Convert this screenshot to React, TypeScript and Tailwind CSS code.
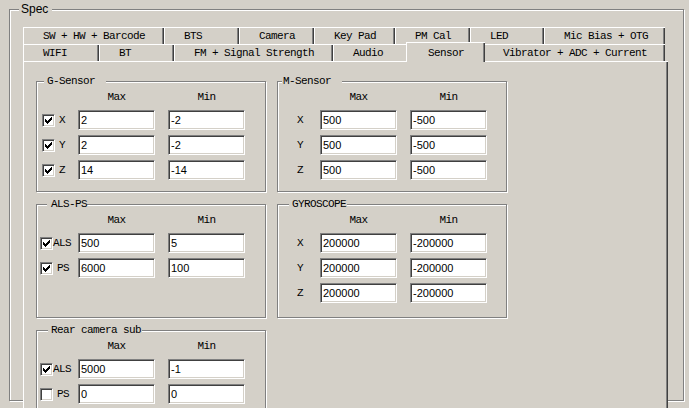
import React from 'react';

const MONO = "font-['Liberation_Mono',monospace] text-[11px] tracking-[-0.6px] leading-[12px]";

function CheckMark() {
  return (
    <svg width="7" height="7" viewBox="0 0 7 7" shapeRendering="crispEdges" fill="#000">
      <path d="M6 0h1v1h-1z M5 1h2v1h-2z M0 2h1v1h-1z M4 2h3v1h-3z M0 3h2v1h-2z M3 3h3v1h-3z M0 4h5v1h-5z M1 5h3v1h-3z M2 6h1v1h-1z" />
    </svg>
  );
}

function CheckBox({ checked }: { checked: boolean }) {
  return (
    <div className="w-[13px] h-[13px] shrink-0 bg-white border border-t-[#808080] border-l-[#808080] border-r-white border-b-white shadow-[inset_1px_1px_0_#404040,inset_-1px_-1px_0_#d4d0c8] flex items-center justify-center">
      {checked ? <CheckMark /> : null}
    </div>
  );
}

function Field({ v }: { v: string }) {
  return (
    <div className="w-[77px] h-[20px] shrink-0 bg-white border border-t-[#808080] border-l-[#808080] border-r-white border-b-white shadow-[inset_1px_1px_0_#404040,inset_-1px_-1px_0_#d4d0c8] pl-[2px] flex items-center font-['Liberation_Sans',sans-serif] text-[11px] text-black">
      {v}
    </div>
  );
}

function Group({
  label,
  labelCls,
  heightCls,
  children,
}: {
  label: string;
  labelCls: string;
  heightCls: string;
  children: React.ReactNode;
}) {
  return (
    <div className={`relative border border-[#808080] shadow-[inset_1px_1px_0_#fff,1px_1px_0_#fff] pt-[9px] ${heightCls}`}>
      <span className={`absolute top-[-7px] bg-[#d4d0c8] whitespace-pre ${MONO} ${labelCls}`}>{label}</span>
      {children}
    </div>
  );
}

function Header({ wide }: { wide: boolean }) {
  return (
    <div className={`flex ${MONO}`}>
      <div className={wide ? 'w-[42px]' : 'w-[41px]'} />
      <div className="w-[77px] text-center">Max</div>
      <div className="w-[13px]" />
      <div className="w-[77px] text-center">Min</div>
    </div>
  );
}

function Rows({ children }: { children: React.ReactNode }) {
  return <div className="mt-[7px] flex flex-col gap-[5px]">{children}</div>;
}

function Inputs({ max, min }: { max: string; min: string }) {
  return (
    <>
      <Field v={max} />
      <div className="w-[13px]" />
      <Field v={min} />
    </>
  );
}

function AxisCheckRow({ axis, max, min }: { axis: string; max: string; min: string }) {
  return (
    <div className="flex items-center h-[20px]">
      <div className={`w-[41px] flex items-center pl-[5px] ${MONO}`}>
        <CheckBox checked />
        <span className="ml-[4px]">{axis}</span>
      </div>
      <Inputs max={max} min={min} />
    </div>
  );
}

function AxisPlainRow({ axis, max, min }: { axis: string; max: string; min: string }) {
  return (
    <div className="flex items-center h-[20px]">
      <div className={`w-[42px] pl-[19px] ${MONO}`}>{axis}</div>
      <Inputs max={max} min={min} />
    </div>
  );
}

function SensorRow({
  name,
  checked,
  gapCls,
  max,
  min,
}: {
  name: string;
  checked: boolean;
  gapCls: string;
  max: string;
  min: string;
}) {
  return (
    <div className="flex items-center h-[20px]">
      <div className={`w-[41px] flex items-center pl-[3px] ${MONO}`}>
        <CheckBox checked={checked} />
        <span className={gapCls}>{name}</span>
      </div>
      <Inputs max={max} min={min} />
    </div>
  );
}

const TAB =
  'h-[17px] flex items-center pl-[19px] border-l border-t border-white shadow-[inset_-1px_0_0_#404040,inset_-2px_0_0_#808080] whitespace-pre';

export default function App() {
  return (
    <div className="w-[689px] h-[408px] bg-[#d4d0c8] overflow-hidden pt-[9px] pl-[9px] text-black">
      <div className="relative w-[675px] h-[392px] border border-[#808080] shadow-[inset_1px_1px_0_#fff,1px_1px_0_#fff] pt-[17px] pl-[13px]">
        <span className="absolute left-[9px] top-[-8px] pl-[2px] pr-[4px] bg-[#d4d0c8] font-['Liberation_Sans',sans-serif] text-[12px] leading-[14px]">
          Spec
        </span>

        {/* tab rows */}
        <div className={`w-[642px] ${MONO}`}>
          <div className="flex">
            <div className={`${TAB} w-[141px]`}>SW + HW + Barcode</div>
            <div className={`${TAB} w-[75px]`}>BTS</div>
            <div className={`${TAB} w-[75px]`}>Camera</div>
            <div className={`${TAB} w-[81px]`}>Key Pad</div>
            <div className={`${TAB} w-[75px]`}>PM Cal</div>
            <div className={`${TAB} w-[74px]`}>LED</div>
            <div className={`${TAB} w-[121px]`}>Mic Bias + OTG</div>
          </div>
          <div className="flex items-start">
            <div className={`${TAB} w-[76px]`}>WIFI</div>
            <div className={`${TAB} w-[75px]`}>BT</div>
            <div className={`${TAB} w-[159px]`}>FM + Signal Strength</div>
            <div className={`${TAB} w-[75px]`}>Audio</div>
            <div className="relative z-10 w-[79px] h-[20px] mx-[-2px] mt-[-2px] mb-[-1px] pl-[21px] flex items-center bg-[#d4d0c8] border-l border-t border-white shadow-[inset_-1px_0_0_#404040,inset_-2px_0_0_#808080]">
              Sensor
            </div>
            <div className={`${TAB} w-[182px]`}>Vibrator + ADC + Current</div>
          </div>
        </div>

        {/* panel */}
        <div className="relative w-[645px] h-[360px] bg-[#d4d0c8] border-l border-t border-white shadow-[inset_-1px_0_0_#404040,inset_-2px_0_0_#808080] pl-[12px] pt-[19px]">
          <div className="grid grid-cols-[230px_230px] grid-rows-[111px_114px_80px] gap-x-[11px] gap-y-[12px]">
            <Group label="G-Sensor" labelCls="left-[7px] pl-[3px] pr-[11px]" heightCls="h-[111px]">
              <Header wide={false} />
              <Rows>
                <AxisCheckRow axis="X" max="2" min="-2" />
                <AxisCheckRow axis="Y" max="2" min="-2" />
                <AxisCheckRow axis="Z" max="14" min="-14" />
              </Rows>
            </Group>
            <Group label="M-Sensor" labelCls="left-[4px] pl-[1px] pr-[11px]" heightCls="h-[111px]">
              <Header wide />
              <Rows>
                <AxisPlainRow axis="X" max="500" min="-500" />
                <AxisPlainRow axis="Y" max="500" min="-500" />
                <AxisPlainRow axis="Z" max="500" min="-500" />
              </Rows>
            </Group>
            <Group label="ALS-PS" labelCls="left-[10px] pl-[4px] pr-[0px]" heightCls="h-[114px]">
              <Header wide={false} />
              <Rows>
                <SensorRow name="ALS" checked gapCls="ml-[0px]" max="500" min="5" />
                <SensorRow name="PS" checked gapCls="ml-[4px]" max="6000" min="100" />
              </Rows>
            </Group>
            <Group label="GYROSCOPE" labelCls="left-[11px] pl-[3px] pr-[1px]" heightCls="h-[114px]">
              <Header wide />
              <Rows>
                <AxisPlainRow axis="X" max="200000" min="-200000" />
                <AxisPlainRow axis="Y" max="200000" min="-200000" />
                <AxisPlainRow axis="Z" max="200000" min="-200000" />
              </Rows>
            </Group>
            <Group label="Rear camera sub" labelCls="left-[11px] pl-[3px] pr-[1px]" heightCls="h-[80px]">
              <Header wide={false} />
              <Rows>
                <SensorRow name="ALS" checked gapCls="ml-[0px]" max="5000" min="-1" />
                <SensorRow name="PS" checked={false} gapCls="ml-[4px]" max="0" min="0" />
              </Rows>
            </Group>
          </div>
        </div>
      </div>
    </div>
  );
}
